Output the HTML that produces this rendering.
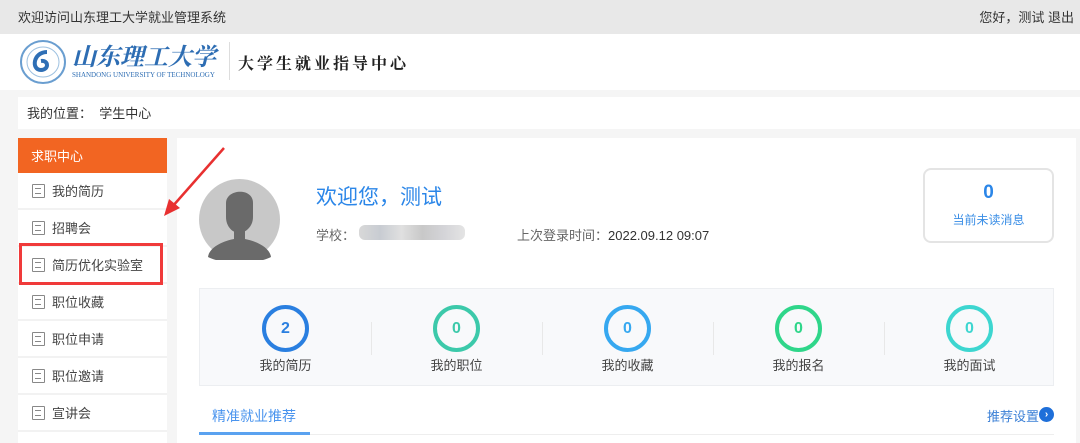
<!DOCTYPE html>
<html><head><meta charset="utf-8"><style>
*{margin:0;padding:0;box-sizing:border-box}
body{width:1080px;height:443px;overflow:hidden;background:#f5f5f5;font-family:"Liberation Sans","Noto Sans CJK SC",sans-serif;color:#333;font-size:13px;position:relative}
.top{position:absolute;left:0;top:0;width:1080px;height:34px;background:#e8e8e8}
.top .l{position:absolute;left:18px;top:7px;font-size:13px;color:#333}
.top .r{position:absolute;right:6px;top:7px;font-size:13px}
.hdr{position:absolute;left:0;top:34px;width:1080px;height:56px;background:#fff}
.bc{position:absolute;left:18px;top:97px;width:1062px;height:32px;background:#fff;font-size:13px;padding:6px 0 0 9px}
.side{position:absolute;left:18px;top:138px;width:149px;height:305px;background:#fff}
.side .h{height:35px;background:#f26522;color:#fff;padding:8px 0 0 13px;font-size:13px}
.it{height:37px;border-bottom:2px solid #f2f2f2;padding:8px 0 0 34px;font-size:13px;color:#444;position:relative}
.it:before{content:"";position:absolute;left:14px;top:11px;width:11px;height:12px;border:1.5px solid #888;border-radius:1px}
.it:after{content:"";position:absolute;left:17px;top:15px;width:6px;height:4px;border-top:1px solid #888;border-bottom:1px solid #888}
.main{position:absolute;left:177px;top:138px;width:899px;height:305px;background:#fff}
.stats{position:absolute;left:22px;top:150px;width:855px;height:98px;background:#f8f9fb;border:1px solid #eceef1}
.st{position:absolute;top:16px;width:171px;text-align:center}
.c{width:47px;height:47px;border:4px solid;border-radius:50%;margin:0 auto;font-weight:bold;font-size:16px;line-height:39px}
.st .t{margin-top:3px;font-size:13px;color:#444}
.sep{position:absolute;top:33px;width:1px;height:33px;background:#e8e8e8}
</style></head><body>
<div class="top"><span class="l">欢迎访问山东理工大学就业管理系统</span><span class="r">您好，测试 退出</span></div>
<div class="hdr">
<svg style="position:absolute;left:19px;top:6px" width="48" height="44"><ellipse cx="24" cy="22" rx="22" ry="21" fill="none" stroke="#6a9ed0" stroke-width="2"/><ellipse cx="24" cy="22" rx="16" ry="15" fill="none" stroke="#9cc0e0" stroke-width="1"/><path d="M28 12 C14 12 12 30 22 30 C30 30 30 20 22 21" fill="none" stroke="#2f6fb5" stroke-width="4"/></svg>
<div style="position:absolute;left:72px;top:7px;font-family:'Noto Serif CJK SC',serif;font-size:24px;line-height:28px;color:#2d6db3;font-style:italic;font-weight:bold;white-space:nowrap">山东理工大学</div>
<div style="position:absolute;left:72px;top:37px;font-family:'Liberation Serif',serif;font-size:7px;color:#2d6db3;white-space:nowrap">SHANDONG UNIVERSITY OF TECHNOLOGY</div>
<div style="position:absolute;left:229px;top:8px;width:1px;height:38px;background:#ddd"></div>
<div style="position:absolute;left:238px;top:17px;font-family:'Noto Serif CJK SC',serif;font-size:16px;letter-spacing:3px;color:#222;font-weight:bold">大学生就业指导中心</div>
</div>
<div class="bc">我的位置：&nbsp; 学生中心</div>
<div class="side">
<div class="h">求职中心</div>
<div class="it">我的简历</div><div class="it">招聘会</div><div class="it">简历优化实验室</div><div class="it">职位收藏</div><div class="it">职位申请</div><div class="it">职位邀请</div><div class="it">宣讲会</div>
</div>
<div style="position:absolute;left:19px;top:243px;width:144px;height:42px;border:3px solid #f03a3a"></div>
<div class="main">
<svg style="position:absolute;left:22px;top:41px" width="81" height="81"><circle cx="40.5" cy="40.5" r="40.5" fill="#c8c8c8"/><path d="M27 24 C27 10 54 8 54 24 L54 38 C54 48 46 54 40 54 C34 54 27 48 27 38 Z" fill="#6a6a6a"/><path d="M35 52 L35 60 C20 63 10 70 9 78 C25 86 56 86 72 78 C71 70 61 63 46 60 L46 52 Z" fill="#6a6a6a"/></svg>
<div style="position:absolute;left:139px;top:43px;font-size:21px;color:#2b86e8">欢迎您，测试</div>
<div style="position:absolute;left:139px;top:87px;font-size:13px;color:#666">学校：</div>
<div style="position:absolute;left:182px;top:87px;width:106px;height:15px;background:linear-gradient(90deg,#d8d8d8,#c8ccd2,#e0e0e0,#c8c8c8,#d4d4d8,#e4e4e4);border-radius:6px"></div>
<div style="position:absolute;left:340px;top:87px;font-size:13px;color:#666">上次登录时间：<span style="color:#333">2022.09.12 09:07</span></div>
<div style="position:absolute;left:746px;top:30px;width:131px;height:75px;border:2px solid #e4e4e4;border-radius:8px;text-align:center">
<div style="font-size:19px;font-weight:bold;color:#2b86e8;margin-top:12px">0</div><div style="font-size:12px;color:#3a8ee6;margin-top:7px">当前未读消息</div></div>
<div class="stats">
<div class="st" style="left:0"><div class="c" style="border-color:#2a7fe0;color:#2a7fe0">2</div><div class="t">我的简历</div></div>
<div class="sep" style="left:171px"></div>
<div class="st" style="left:171px"><div class="c" style="border-color:#3cc9aa;color:#3cc9aa">0</div><div class="t">我的职位</div></div>
<div class="sep" style="left:342px"></div>
<div class="st" style="left:342px"><div class="c" style="border-color:#36a8f0;color:#36a8f0">0</div><div class="t">我的收藏</div></div>
<div class="sep" style="left:513px"></div>
<div class="st" style="left:513px"><div class="c" style="border-color:#2fd68a;color:#2fd68a">0</div><div class="t">我的报名</div></div>
<div class="sep" style="left:684px"></div>
<div class="st" style="left:684px"><div class="c" style="border-color:#3dd6d0;color:#3dd6d0">0</div><div class="t">我的面试</div></div>
</div>
<div style="position:absolute;left:22px;top:296px;width:855px;height:1px;background:#eee"></div>
<div style="position:absolute;left:22px;top:294px;width:111px;height:3px;background:#5aa2f0"></div>
<div style="position:absolute;left:35px;top:268px;font-size:14px;color:#4a94ee">精准就业推荐</div>
<div style="position:absolute;left:810px;top:268px;font-size:13px;color:#3a7fd6">推荐设置</div>
<div style="position:absolute;left:862px;top:269px;width:15px;height:15px;border-radius:50%;background:#1e6fd9;color:#fff;font-size:10px;line-height:15px;text-align:center;font-weight:bold">›</div>
</div>
<svg style="position:absolute;left:160px;top:145px" width="70" height="75"><line x1="64" y1="3" x2="12" y2="62" stroke="#e83030" stroke-width="2.5"/><polygon points="4,71 9,54 20,63" fill="#e83030"/></svg>
</body></html>
